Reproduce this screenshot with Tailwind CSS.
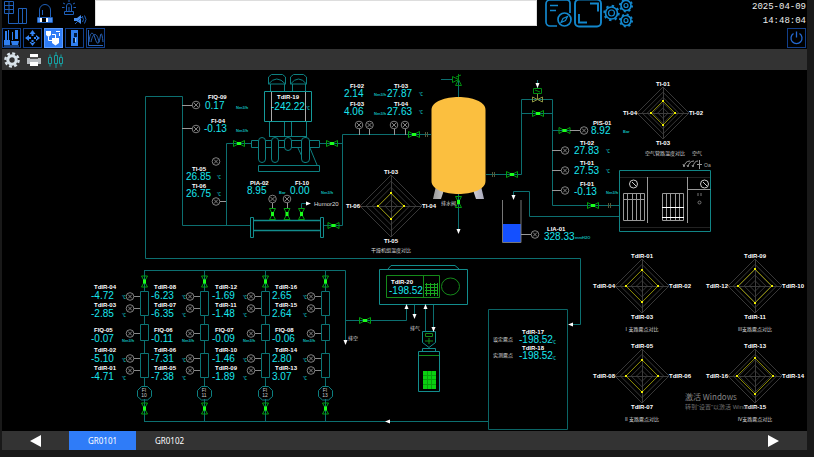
<!DOCTYPE html>
<html lang="zh-CN">
<head>
<meta charset="utf-8">
<meta name="viewport" content="width=device-width, initial-scale=1">
<title>GR0101</title>
<script src="https://cdn.jsdelivr.net/npm/@tailwindcss/browser@4"></script>
</head>
<body class="min-h-screen bg-[#191919] pl-[2px] pr-[7px] font-['Liberation_Sans','Noto_Sans_CJK_SC',sans-serif] text-white">
<div class="flex flex-col bg-black">
  <header class="pr-[1px]">
    <div class="flex h-7 items-start">
      <div class="flex w-[93px] shrink-0 items-start" aria-hidden="true">
        <svg class="h-[26px] w-[92px]" viewBox="2 0 92 26" fill="none" stroke="#1f5fb8">
          <path d="M4.500 1.500h9v12h-9zM4.500 5.500h9M4.500 9.500h9M9 1.500v12M8.500 13.500v10h10M18.500 8.500h8v15h-8zM22.500 8.500v15"/>
          <path d="M39.500 17v-7a5.500 5.500 0 0 1 11 0v7M42.500 15v-5M37.500 17.500h15v5h-15z"/>
          <path d="M38 18h4v4h-4zM48 18h4v4h-4z" fill="#4f92f5" stroke="none"/>
          <path d="M40 18h2v4h-2zM46 18h2v4h-2z" fill="#fff" stroke="none"/>
          <path d="M66.500 11v-5a2.500 2.500 0 0 1 5 0v5M64.500 11.500h9v3h-9zM69 7v4M69 0v2M63 3l2 1M75 3l-2 1M62 7.500h2.500M73.500 7.500h2.500"/>
          <path d="M74 18h3l4-3v9l-4-3h-3z" fill="#4a90ee" stroke="none"/>
          <path d="M82.500 17q2 2.500 0 5M84.500 15.500q3 4 0 8M75 24l8-8"/>
        </svg>
      </div>
      <input type="text" aria-label="消息" class="h-[26px] w-[55%] border border-[#ddd] bg-white px-2 text-xs text-black outline-none">
      <div class="ml-2 flex items-start gap-[1px]">
        <button type="button" aria-label="报表" class="h-7 w-7"><svg class="h-7 w-7" viewBox="547 0 28 28" fill="none" stroke="#1387cc" stroke-width="1.700"><path d="M572 13V3a3 3 0 0 0-3-3h-17a4 4 0 0 0-4 4v18a4 4 0 0 0 4 4h7M552 5.500h8M552 10.500h6"/><circle cx="566.500" cy="19.500" r="6.500"/><path d="M563 22.500l2-4 4.500-2-2 4z" stroke-width="1.200"/></svg></button>
        <button type="button" aria-label="全屏" class="h-7 w-7"><svg class="h-7 w-7" viewBox="575 0 28 28" fill="none" stroke="#1387cc" stroke-width="1.900"><rect x="576" y="-.500" width="26" height="27" rx="4"/><path d="M591 3.500h8v8M580 14v8.500h8"/></svg></button>
        <button type="button" aria-label="设置" class="h-7 w-8"><svg class="h-7 w-8" viewBox="604 0 32 28" fill="none" stroke="#1387cc"><g stroke-width="1.700"><circle cx="612.500" cy="13" r="6"/><circle cx="627" cy="5.500" r="5"/><circle cx="627" cy="20.500" r="5"/></g><g stroke-width="1.200"><circle cx="612.500" cy="13" r="3"/><circle cx="627" cy="5.500" r="2"/><circle cx="627" cy="20.500" r="2"/></g><g stroke-width="2"><circle cx="612.500" cy="13" r="7.200" stroke-dasharray="2.400 3.250"/><circle cx="627" cy="5.500" r="6" stroke-dasharray="2 2.700"/><circle cx="627" cy="20.500" r="6" stroke-dasharray="2 2.700"/></g></svg></button>
      </div>
      <div class="ml-auto text-right font-['Liberation_Mono',monospace] text-[9px] leading-[14px] text-[#eee]">
        <time class="block h-[14px]">2025-04-09</time>
        <time class="block h-[14px]">14:48:04</time>
      </div>
    </div>
    <nav class="flex h-[21px] gap-[2px]">
      <button type="button" aria-label="设备" class="h-5 w-[19px] border border-[#123f8a]"><svg class="h-full w-full" viewBox="0 0 17 18" fill="#2f7ff0"><path d="M2 2h2v9H2zM5 1h1v10H5zM1 11h6v5H1zM9 3h1v8H9zM12 1h3v9h-3zM8 12h8l-1 4H9z"/><path d="M1 17h15" stroke="#2f7ff0"/></svg></button>
      <button type="button" aria-label="移动" class="h-5 w-[19px] border border-[#123f8a]"><svg class="h-full w-full" viewBox="0 0 17 18" fill="#3585f5"><path d="M8.500 1l3 4h-6zM8.500 17l3-4h-6zM1 9l4-3v6zM16 9l-4-3v6zM7.500 4h2v3h-2zM7.500 11h2v3h-2zM4 8h3v2H4zM10 8h3v2h-3z"/></svg></button>
      <button type="button" aria-label="流程图" aria-current="page" class="h-5 w-[19px] border border-[#5b9bff] bg-[#2f7cf6]"><svg class="h-full w-full" viewBox="0 0 17 18" fill="#fff"><path d="M1 2h5v4l-2.500 2L1 6zM7 9h7v5l-3.500 2.500L7 14zM11 2h4v1h-4z"/><path d="M3.500 8v3.500H7M10.500 9V5.500H7M14.500 4v3" fill="none" stroke="#fff"/></svg></button>
      <button type="button" aria-label="开关" class="h-5 w-[19px] border border-[#123f8a]"><svg class="h-full w-full" viewBox="0 0 17 18"><path d="M5 1h7v16H5z" fill="#2f7ff0"/><path d="M8 4h3v4H8zM7 9h2v5H7z" fill="#001a40"/><path d="M9.500 9v4" stroke="#9cf"/></svg></button>
      <button type="button" aria-label="曲线" class="h-5 w-[19px] border border-[#123f8a]"><svg class="h-full w-full" viewBox="0 0 17 18" fill="none" stroke="#2a64b8"><path d="M1.500 1v15.500H16M2 13C3 2 6 2 8 9s4 7 5 0 2-5 3 4M4 13c2-10 6-10 8 0"/></svg></button>
      <button type="button" aria-label="电源" class="ml-auto h-5 w-[19px] border border-[#123f8a]"><svg class="h-full w-full" viewBox="0 0 17 18" fill="none" stroke="#2468d0" stroke-width="1.300"><path d="M5.500 4.500a5.500 5.500 0 1 0 6 0M8.500 2.500v6"/></svg></button>
    </nav>
  </header>

  <div class="flex h-[21px] items-center gap-[6px] bg-[#333] px-[2px]">
    <button type="button" aria-label="参数" class="size-4"><svg class="size-4" viewBox="0 0 16 16" fill="none" stroke="#d9e3ea"><circle cx="8" cy="8" r="4.200" stroke-width="3"/><circle cx="8" cy="8" r="6.600" stroke-width="2.400" stroke-dasharray="2.900 2.280"/></svg></button>
    <button type="button" aria-label="打印" class="size-4"><svg class="size-4" viewBox="0 0 16 16"><path d="M4 2h8v4H4z" fill="#fff"/><path d="M1 6h14v6H1z" fill="#b8bcc0"/><path d="M4 5h8v2H4z" fill="#555"/><path d="M4 10h8v4H4z" fill="#fff"/></svg></button>
    <button type="button" aria-label="趋势" class="size-4"><svg class="size-4" viewBox="0 0 16 16" fill="none" stroke="#17a0a2"><path d="M.500 5.500h3v6h-3zM6.500 3.500h3v8h-3zM11.500 5.500h3v6h-3zM2 2.500v3M2 11.500V14.500M8 0v3.500M8 11.500V16M13 2.500v3M13 11.500V14.500"/></svg></button>
  </div>

  <main>
    <svg id="plant" class="block h-auto w-full" viewBox="2 70 805 361" role="img" aria-label="工艺流程图">
      <defs>
        <g id="valve" fill="none" stroke="#00a010"><path d="M-5.500-3v6L0 0zM5.500-3v6L0 0z"/><path d="M-2-1.500h4v3h-4z" fill="#1cff1c" stroke="none"/></g>
        <g id="gauge" fill="#000" stroke="#8c8c8c" stroke-width=".9"><circle r="3.800"/><path d="M-2-2L2 2M2-2L-2 2"/></g>
        <g id="arrow" fill="#fff"><path d="M-2-4h4L0 1z"/></g>
        <linearGradient id="leg"><stop offset="0" stop-color="#999"/><stop offset=".5" stop-color="#fff"/><stop offset="1" stop-color="#aab"/></linearGradient>
      </defs>

      <!-- pipework -->
      <g fill="none" stroke="#0c6f70">
        <path d="M250 225.500H182.500V96.500H145.500V258.500H580.500V324.500H570"/>
        <path d="M226.500 225.500V143.500H251M320 143.500H343M324 225.500H342.500V134.500H431"/>
        <path d="M458.500 97V80M441 79.500H453M458.500 194V230"/>
        <path d="M486 174.500H521.500V99.500H552.500V205.500H620M521.500 113.500H552M552 130.500H570M537.500 80V88"/>
        <path d="M620 216.500H529.500V191.500H513.500V196M301.500 208V203.500H307"/>
        <path d="M144 270.500H345.500V341M345 320.500H406.500V308M144 421.500H488"/>
        <path d="M414.500 305V315M425.500 308V331M433.500 305V328"/>
      </g>

      <!-- compressor -->
      <g fill="none" stroke="#0d7f80">
        <path d="M268.500 84V77l3-2.500h11l3 2.500v7zM290.500 84V77l3-2.500h10l3 2.500v7zM268.500 84q8-10 17 0M290.500 84q8-10 16 0M270.500 84V91M284.500 84V91M292.500 84V91M305.500 84V91"/>
        <path d="M264.500 91.500h47v30h-47z" stroke="#159a9a"/>
        <path d="M269.500 122v15M306.500 122v15M269 136.500h38M284.500 122v15M291.500 122v15"/>
        <path d="M251.500 140.500h68v7h-68zM258.500 165.500h61v6h-61zM298 148l7 15M310 148l7 17"/>
        <g fill="#000"><rect x="258.500" y="137.500" width="7" height="25" rx="3.500"/><rect x="271.500" y="137.500" width="7" height="25" rx="3.500"/><rect x="284.500" y="137.500" width="7" height="13" rx="3.500"/><rect x="301.500" y="137.500" width="8" height="25" rx="3.500"/></g>
        <path d="M271.500 92v29M305.500 92v29" stroke="#aaa"/>
      </g>

      <!-- heat exchanger -->
      <g fill="none" stroke="#128c8d"><path d="M250.500 217.500h3v20h-3zM320.500 217.500h3v20h-3z"/><path d="M254 220.500h66M254 230.500h66" stroke-width="1.500"/></g>

      <!-- storage tank -->
      <path d="M436 186l8 4-3 9h-8zM473 190l8-4 3 13h-8z" fill="url(#leg)"/>
      <path d="M431.500 110C431.500 101 446 97 458.500 97S485.500 101 485.500 110V181C485.500 190 471 194 458.500 194S431.500 190 431.500 181Z" fill="#fbbf3f"/>
      <g fill="none" stroke="#008c10"><path d="M452.500 76.500v6l6-3zM455.500 85.500h6l-3-6zM458.500 80v-6M456 77l5-2"/><path d="M533.500 88.500h8v5h-8zM535 90l5 2"/></g>
      <path d="M532.500 97v5l5-2.500zM542.500 97v5l-5-2.500zM537.500 94v5" fill="none" stroke="#8a9440"/>
      <path d="M425.500 132v5M427.500 132v5M492.500 172v5M494.500 172v5M608.500 203v5M610.500 203v5" stroke="#555a3a"/>

      <!-- level vessel -->
      <path d="M503 224h18v18h-18z" fill="#1450ff"/>
      <path d="M502.500 200v42.500h18.500V200" fill="none" stroke="#777"/>

      <!-- cold box cabinet -->
      <g fill="none">
        <path d="M619.500 170.500h91v61h-91z" stroke="#118586"/>
        <path d="M620 177.500h90M620 227.500h90" stroke="#222"/>
        <path d="M647.500 177v46M687.500 177v46M687.500 189.500h23" stroke="#999"/>
        <path d="M623.500 193.500h21v27h-21zM627.500 193v28M632.500 193v28M636.500 193v28M640.500 193v28M623 199.500h22M662.500 193.500h21v27h-21zM666.500 193v28M670.500 193v28M675.500 193v28M679.500 193v28" stroke="#999"/>
        <path d="M662 207.500h22M662 217.500h22" stroke="#fff"/>
        <g stroke="#ccc"><circle cx="633.500" cy="184" r="4"/><circle cx="704.500" cy="184" r="4"/><path d="M632 182l4 4M703 182l4 4"/></g>
        <path d="M698 193v3M701 193v3" stroke="#777"/><circle cx="699.500" cy="202.500" r="1.500" stroke="#777"/>
        <path d="M683 164l1 3q1-6 6-6M687 165l1 2q1-6 6-6M692 165l1 2q1-6 5-6M699.500 160v9M697 164.500h5" stroke="#999"/>
      </g>

      <!-- dew point analyser -->
      <g fill="none" stroke="#128c8d">
        <path d="M379.500 269.500h88v35h-88zM388 269l3-3.500h64l4 3.500"/>
        <path d="M422.500 331.500h13v11l-6.500 5-6.500-5zM422.500 348.500h13v3h-13zM418.500 351.500h21v40h-21z"/>
        <g stroke="#158a1a"><path d="M386.500 275.500h53v22h-53zM423.500 275v22"/><ellipse cx="450.500" cy="286.500" rx="9" ry="8.500"/><path d="M419 355.500h20M425.500 333.500h7v3h-7zM425 341h8M429 338v6"/></g>
        <path d="M425 284.500h13M425 287.500h13M425 290.500h13M425 293.500h13M426.500 283v13M430.500 283v13M434.500 283v13M437.500 283v13" stroke="#19a820"/>
        <path d="M423 371h13v18h-13z" fill="#0ad010" stroke="none"/>
        <path d="M423 375.500h13M423 379.500h13M423 384.500h13M427.500 371v18M431.500 371v18" stroke="#08a00c"/>
        <path d="M488.500 309.500h79v120h-79z" stroke="#0b6566"/>
      </g>

      <g id="parts"></g>
      <g id="radars"></g>
      <g id="tags"></g>
    </svg>
  </main>

  <footer class="flex h-[19px] items-stretch bg-[#333] font-['Noto_Sans',sans-serif] text-[8px] leading-none">
    <button type="button" aria-label="上一页" class="flex w-[67px] items-center justify-center"><svg class="h-3 w-[11px]" viewBox="0 0 11 12"><path d="M11 0v12L0 6z" fill="#fff"/></svg></button>
    <button type="button" aria-current="page" class="w-[67px] bg-[#2f7cf8]">GR0101</button>
    <button type="button" class="w-[67px]">GR0102</button>
    <button type="button" aria-label="下一页" class="ml-auto flex w-[67px] items-center justify-center"><svg class="h-3 w-[11px]" viewBox="0 0 11 12"><path d="M0 0v12l11-6z" fill="#fff"/></svg></button>
  </footer>
</div>

<script>
const put = (id, s) => { document.getElementById(id).innerHTML += s; };
const text = (s, x, y, size, fill, extra = '') => `<text x="${x}" y="${y}" font-size="${size}" fill="${fill}" ${extra}>${s}</text>`;
const label = (s, x, y, extra = '') => text(s, x, y, 6, '#fff', 'font-weight="700" ' + extra);
const use = (id, x, y, rot = 0) => `<use href="#${id}" transform="translate(${x} ${y}) rotate(${rot})"/>`;
const line = (d, c) => `<path d="${d}" fill="none" stroke="${c}"/>`;

// label, x, baseline, value, x, baseline, unit, x, baseline
const tags = [
  ['FIQ-09',208,99,'0.17',205,109,'Nm3/h',236,109],
  ['FI-04',211,123,'-0.13',204,132,'Nm3/h',236,132],
  ['TdIR-19',277,99,'-242.22',271,110,'℃',306,110],
  ['TI-05',192,171,'26.85',186,180,'℃',217,179],
  ['TI-06',192,188,'26.75',186,197,'℃',217,196],
  ['PIA-02',250,185,'8.95',247,194,'Bar',279,194],
  ['FI-10',295,185,'0.00',290,194,'Nm3/h',321,194],
  ['FI-02',350,88,'2.14',344,97,'Nm3/h',374,96],
  ['TI-03',394,88,'27.87',387,97,'℃',419,96],
  ['FI-03',350,106,'4.06',344,115,'Nm3/h',374,115],
  ['TI-04',394,106,'27.63',387,115,'℃',419,114],
  ['PIS-01',593,125,'8.92',591,134,'Bar',623,133],
  ['TI-02',580,145,'27.83',574,154,'℃',606,153],
  ['TI-01',580,165,'27.53',574,174,'℃',606,173],
  ['FI-01',580,186,'-0.13',574,195,'Nm3/h',606,194],
  ['LIA-01',547,231,'328.33',544,240,'mmH2O',575,239],
  ['TdIR-20',391,284,'-198.52',389,294,'',0,0],
  ['TdIR-17',522,334,'-198.52',519,343,'℃',552,344],
  ['TdIR-18',522,350,'-198.52',519,359,'℃',552,360],
];
const columns = [
  [144, 10, ['TdIR-04','-4.72'],['TdIR-03','-2.85'],['FIQ-05','-0.07'],['TdIR-02','-5.10'],['TdIR-01','-4.71']],
  [204, 11, ['TdIR-08','-6.23'],['TdIR-07','-6.35'],['FIQ-06','-0.11'],['TdIR-06','-7.31'],['TdIR-05','-7.38']],
  [265, 12, ['TdIR-12','-1.69'],['TdIR-11','-1.48'],['FIQ-07','-0.09'],['TdIR-10','-1.46'],['TdIR-09','-1.89']],
  [325, 13, ['TdIR-16','2.65'],['TdIR-15','2.64'],['FIQ-08','-0.06'],['TdIR-14','2.80'],['TdIR-13','3.07']],
];
const rows = [[289,299,296],[307,317,308],[332,342,333],[352,362,358],[370,380,370]];
for (const [cx, no, ...items] of columns) {
  const x = cx + .5;
  let s = line(`M${x} 270V292M${x} 316V324M${x} 341V354M${x} 378V387M${x} 399V421`, '#0c6f70');
  s += line(`M${x-4} 291.500h8v24h-8zM${x-4} 324.500h8v16h-8zM${x-4} 353.500h8v24h-8z`, '#0b7374');
  s += line(`M${x-3} 386.500h6l4 4v6l-4 3.500h-6l-4-3.500v-6z`, '#0d7f80');
  s += text('FI', cx, 392, 5, '#ccc', 'text-anchor="middle"') + text(no, cx, 397, 5, '#ccc', 'text-anchor="middle"');
  s += use('valve', x, 281.5, 90) + use('valve', x, 408.5, 90);
  items.forEach(([l, v], i) => {
    const [ly, vy, gy] = rows[i];
    s += line(`M${cx-10} ${gy+.5}H${cx-4}`, '#888') + use('gauge', cx - 14, gy + .5);
    tags.push([l, cx - 50, ly, v, cx - 53, vy, i === 2 ? 'Nm3/h' : '℃', cx - 22, vy]);
  });
  put('parts', s);
}
put('tags', tags.map(([l, lx, ly, v, vx, vy, u, ux, uy]) =>
  label(l, lx, ly) + text(v, vx, vy, 10, '#19e6ee') + (u ? text(u, ux, uy, 4, '#0fb5b8', 'font-weight="700"') : '')).join(''));

put('parts',
  [[239,143.5],[332,143.5],[333.5,225.5],[414,134.5],[512,174.5],[538,113.5],[564.5,130.5],[593,205.5],[365,320.5]].map(p => use('valve', ...p)).join('') +
  [[272.5,214],[287,214],[301.5,214],[458.5,202]].map(p => use('valve', ...p, 90)).join('') +
  line('M182 105.500H192M182 128.500H192M220 201.500H226M272.500 203V208M287.500 203V208M359.500 129V135M369.500 129V135M394.500 129V135M405.500 129V135M570 130.500H580M552 150.500H561M552 170.500H561M552 190.500H561M521 234.500H531', '#999') +
  [[196,105],[196,129],[216,161.5],[216,201.5],[272.5,199],[287,199],[359,125],[369.5,125],[394,125],[405,125],[584,130.5],[565,150.5],[565,170.5],[565,190.5],[535,234.5]].map(p => use('gauge', ...p)).join('') +
  [[458.5,233,0],[513.5,199,0],[537.5,87,0],[345.5,344,0],[414.5,318,0],[433.5,331,0],[406.5,305,180],[425.5,305,180],[569,324.5,90],[386,421.5,90],[310,203.5,-90]].map(p => use('arrow', ...p)).join(''));

// cx, cy, radius, value radius, labels (top, right, bottom, left), caption, caption baseline
[
  [663,113,26,12,['TI-01','TI-02','TI-03','TI-04'],'空气管路温度对比',155],
  [391,206,31,13,['TI-03','TI-04','TI-05','TI-06'],'干燥机组温度对比',252],
  [642,286,27,16,['TdIR-01','TdIR-02','TdIR-03','TdIR-04'],'I 支路露点对比',331],
  [755,286,27,17,['TdIR-09','TdIR-10','TdIR-11','TdIR-12'],'III支路露点对比',331],
  [642,376,27,16,['TdIR-05','TdIR-06','TdIR-07','TdIR-08'],'II 支路露点对比',421],
  [755,376,27,18,['TdIR-13','TdIR-14','TdIR-15','TdIR-16'],'IV支路露点对比',421],
].forEach(([x, y, r, v, l, cap, capY]) => {
  const d = k => `M${x} ${y-k}L${x+k} ${y}L${x} ${y+k}L${x-k} ${y}Z`;
  let s = [.2,.4,.6,.8,1].map(k => line(d(r * k), '#383838')).join('');
  s += line(`M${x-r} ${y+.5}H${x+r}M${x+.5} ${y-r}V${y+r}`, '#3c3c3c') + line(d(v), '#858500');
  s += `<path d="M${x-1} ${y-v-1}h2v2h-2zM${x-1} ${y+v-1}h2v2h-2zM${x-v-1} ${y-1}h2v2h-2zM${x+v-1} ${y-1}h2v2h-2z" fill="#ee0"/>`;
  s += label(l[0], x, y-r-1, 'text-anchor="middle"') + label(l[1], x+r, y+2) + label(l[2], x, y+r+6, 'text-anchor="middle"') + label(l[3], x-r, y+2, 'text-anchor="end"');
  s += text(cap, r === 26 ? x+2 : x, capY, 5, '#ddd', 'text-anchor="middle"');
  put('radars', s);
});

put('tags',
  text('Humor20', 314, 206, 6, '#ddd') + text('排水阀', 441, 205, 5, '#ddd') + text('空气', 692, 155, 5, '#ddd') + text('Oa', 704, 167, 5, '#aaa') +
  text('排空', 348, 340, 5, '#ddd') + text('排气', 410, 330, 5, '#ddd') +
  text('设定露点', 493, 341, 5, '#ddd') + text('实测露点', 493, 357, 5, '#ddd') +
  text('激活 Windows', 685, 400, 8, '#868686', `font-family="'Noto Sans CJK SC', sans-serif"`) +
  text('转到“设置”以激活 Windows', 685, 409, 6, '#707070'));
</script>
</body>
</html>
